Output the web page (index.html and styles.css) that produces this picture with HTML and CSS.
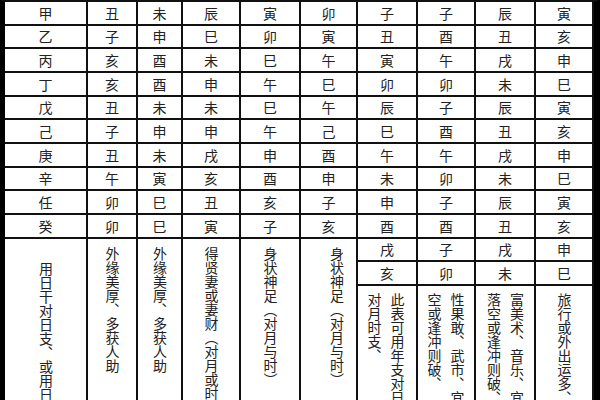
FILE: index.html
```html
<!DOCTYPE html>
<html lang="zh-CN">
<head>
<meta charset="utf-8">
<title>日干对照表</title>
<link rel="stylesheet" href="styles.css">
</head>
<body>
<div class="sheet">
  <div class="c">甲</div><div class="c">丑</div><div class="c">未</div><div class="c">辰</div><div class="c">寅</div><div class="c">卯</div><div class="c">子</div><div class="c">子</div><div class="c">辰</div><div class="c">寅</div>
  <div class="c">乙</div><div class="c">子</div><div class="c">申</div><div class="c">巳</div><div class="c">卯</div><div class="c">寅</div><div class="c">丑</div><div class="c">酉</div><div class="c">丑</div><div class="c">亥</div>
  <div class="c">丙</div><div class="c">亥</div><div class="c">酉</div><div class="c">未</div><div class="c">巳</div><div class="c">午</div><div class="c">寅</div><div class="c">午</div><div class="c">戌</div><div class="c">申</div>
  <div class="c">丁</div><div class="c">亥</div><div class="c">酉</div><div class="c">申</div><div class="c">午</div><div class="c">巳</div><div class="c">卯</div><div class="c">卯</div><div class="c">未</div><div class="c">巳</div>
  <div class="c">戊</div><div class="c">丑</div><div class="c">未</div><div class="c">未</div><div class="c">巳</div><div class="c">午</div><div class="c">辰</div><div class="c">子</div><div class="c">辰</div><div class="c">寅</div>
  <div class="c">己</div><div class="c">子</div><div class="c">申</div><div class="c">申</div><div class="c">午</div><div class="c">己</div><div class="c">巳</div><div class="c">酉</div><div class="c">丑</div><div class="c">亥</div>
  <div class="c">庚</div><div class="c">丑</div><div class="c">未</div><div class="c">戌</div><div class="c">申</div><div class="c">酉</div><div class="c">午</div><div class="c">午</div><div class="c">戌</div><div class="c">申</div>
  <div class="c">辛</div><div class="c">午</div><div class="c">寅</div><div class="c">亥</div><div class="c">酉</div><div class="c">申</div><div class="c">未</div><div class="c">卯</div><div class="c">未</div><div class="c">巳</div>
  <div class="c">任</div><div class="c">卯</div><div class="c">巳</div><div class="c">丑</div><div class="c">亥</div><div class="c">子</div><div class="c">申</div><div class="c">子</div><div class="c">辰</div><div class="c">寅</div>
  <div class="c">癸</div><div class="c">卯</div><div class="c">巳</div><div class="c">寅</div><div class="c">子</div><div class="c">亥</div><div class="c">酉</div><div class="c">酉</div><div class="c">丑</div><div class="c">亥</div>

  <div class="tall t1"><div class="v">用日干对日支、或用日干对时支</div></div>
  <div class="tall"><div class="v">外缘美厚、多获人助</div></div>
  <div class="tall"><div class="v">外缘美厚、多获人助</div></div>
  <div class="tall"><div class="v">得贤妻或妻财（对月或时）</div></div>
  <div class="tall"><div class="v">身状神足（对月与时）</div></div>
  <div class="tall t6"><div class="v">身状神足（对月与时）</div></div>

  <div class="c">戌</div><div class="c">子</div><div class="c">戌</div><div class="c">申</div>
  <div class="c">亥</div><div class="c">卯</div><div class="c">未</div><div class="c">巳</div>

  <div class="note n7"><div class="v">此表可用年支对日支、<br>对月时支、</div></div>
  <div class="note n8"><div class="v">性果敢、武市、宜从事若<br>空或逢冲则破、</div></div>
  <div class="note n9"><div class="v">富美术、音乐、宜从事若<br>落空或逢冲则破、</div></div>
  <div class="note"><div class="v">旅行或外出运多、</div></div>
</div>
</body>
</html>
```

FILE: styles.css
```css
html, body {
  margin: 0;
  padding: 0;
  overflow: hidden;
  background: #ffffff;
}

.sheet {
  display: grid;
  grid-template-columns: 83px 50px 45px 58px 60px 57px 60px 58px 60px 58px;
  grid-template-rows: repeat(12, 23.67px) 170px;
  border-top: 2px solid #111;
  border-left: 5px solid #000;
  border-right: 6px solid #000;
  width: 589px;
  font-family: "Noto Sans CJK SC", "Noto Sans", sans-serif;
  font-size: 14px;
  color: #222;
}

.c {
  display: flex;
  align-items: center;
  justify-content: center;
  border-right: 2px solid #111;
  border-bottom: 2px solid #111;
  line-height: 1;
}

.tall {
  grid-row: span 3;
  display: flex;
  justify-content: center;
  align-items: flex-start;
  padding-top: 8px;
  border-right: 2px solid #111;
  border-bottom: 2px solid #111;
  overflow: hidden;
}

.t1 {
  padding-top: 23px;
}

.t6 {
  padding-left: 16px;
}

.note {
  display: flex;
  justify-content: center;
  align-items: flex-start;
  padding-top: 7px;
  border-right: 2px solid #111;
  border-bottom: 2px solid #111;
  overflow: hidden;
}

.n7 {
  padding-right: 3px;
}

.n8 {
  padding-right: 1px;
}

.v {
  writing-mode: vertical-rl;
  white-space: nowrap;
  line-height: 23px;
}
```
